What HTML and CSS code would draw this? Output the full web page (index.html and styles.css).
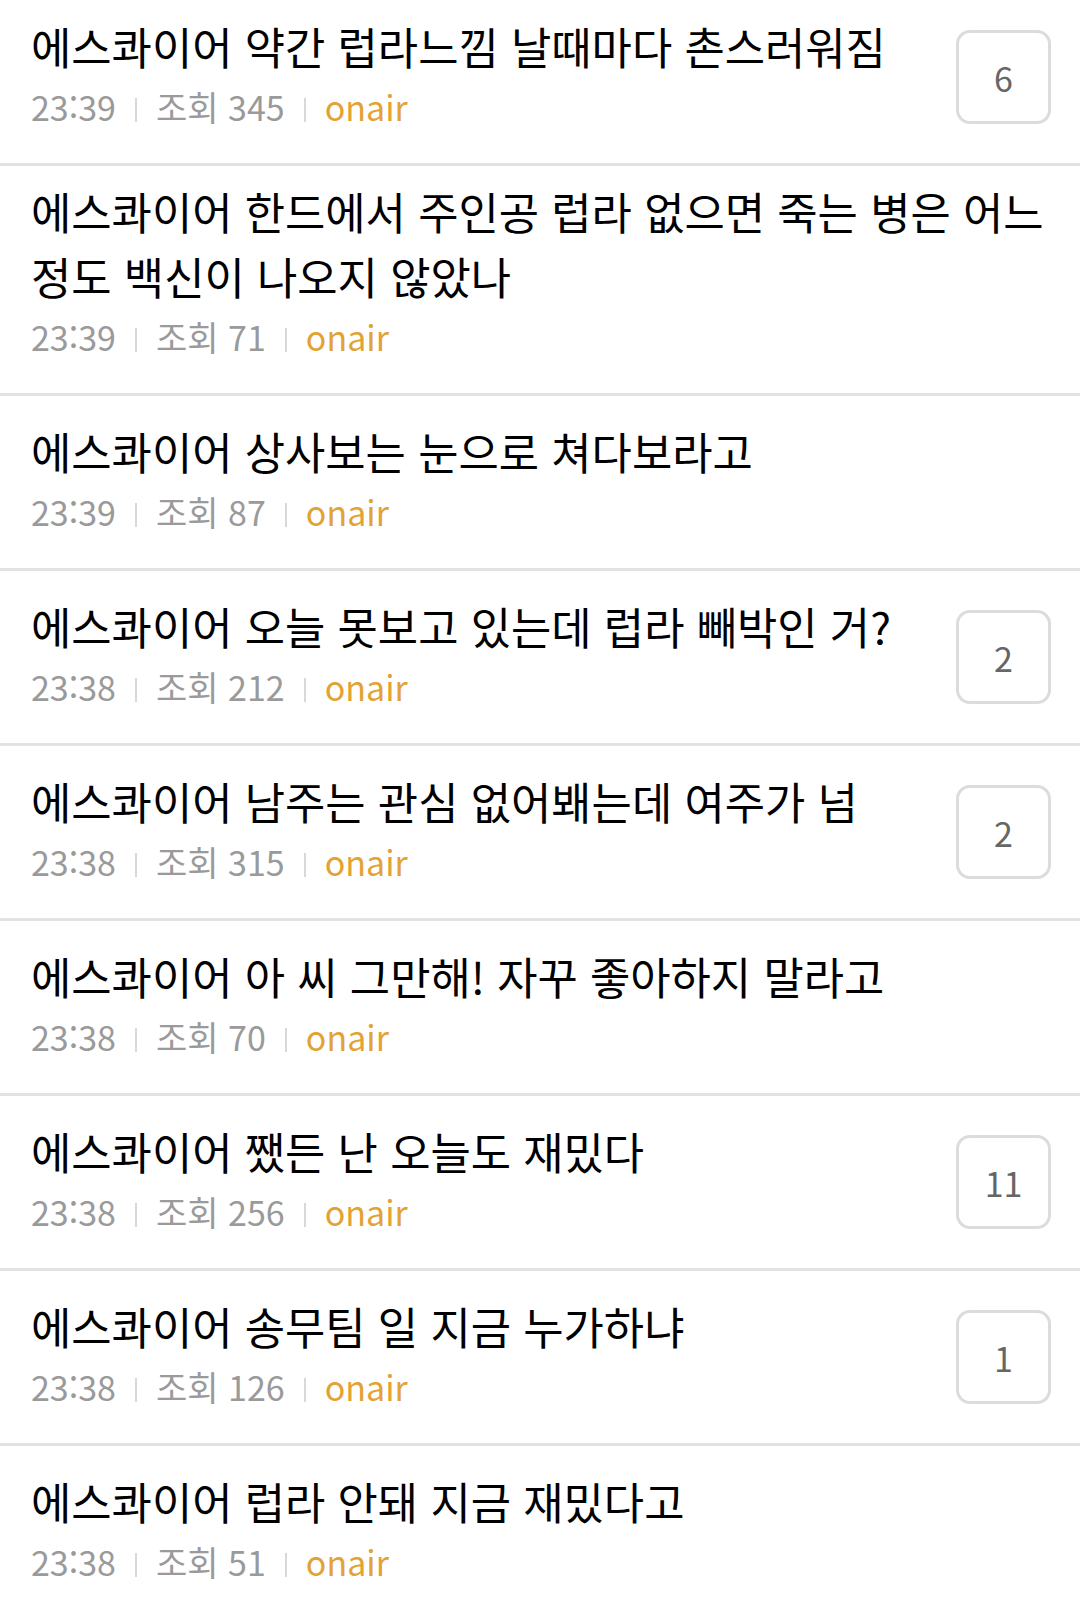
FILE: index.html
```html
<!DOCTYPE html>
<html lang="ko">
<head>
    <meta charset="UTF-8">
    <meta name="viewport" content="width=device-width, initial-scale=1.0">
    <title>onair</title>
    <link rel="stylesheet" href="styles.css">
</head>
<body>
<ul class="post-list">
    <li class="post">
        <div class="post-info">
            <p class="post-title">에스콰이어 약간 럽라느낌 날때마다 촌스러워짐</p>
            <div class="post-meta"><span>23:39</span><span>조회 345</span><span class="board">onair</span></div>
        </div>
        <span class="cmt">6</span>
    </li>
    <li class="post">
        <div class="post-info">
            <p class="post-title">에스콰이어 한드에서 주인공 럽라 없으면 죽는 병은 어느 정도 백신이 나오지 않았나</p>
            <div class="post-meta"><span>23:39</span><span>조회 71</span><span class="board">onair</span></div>
        </div>
    </li>
    <li class="post">
        <div class="post-info">
            <p class="post-title">에스콰이어 상사보는 눈으로 쳐다보라고</p>
            <div class="post-meta"><span>23:39</span><span>조회 87</span><span class="board">onair</span></div>
        </div>
    </li>
    <li class="post">
        <div class="post-info">
            <p class="post-title">에스콰이어 오늘 못보고 있는데 럽라 빼박인 거?</p>
            <div class="post-meta"><span>23:38</span><span>조회 212</span><span class="board">onair</span></div>
        </div>
        <span class="cmt">2</span>
    </li>
    <li class="post">
        <div class="post-info">
            <p class="post-title">에스콰이어 남주는 관심 없어봬는데 여주가 넘</p>
            <div class="post-meta"><span>23:38</span><span>조회 315</span><span class="board">onair</span></div>
        </div>
        <span class="cmt">2</span>
    </li>
    <li class="post">
        <div class="post-info">
            <p class="post-title">에스콰이어 아 씨 그만해! 자꾸 좋아하지 말라고</p>
            <div class="post-meta"><span>23:38</span><span>조회 70</span><span class="board">onair</span></div>
        </div>
    </li>
    <li class="post">
        <div class="post-info">
            <p class="post-title">에스콰이어 쨌든 난 오늘도 재밌다</p>
            <div class="post-meta"><span>23:38</span><span>조회 256</span><span class="board">onair</span></div>
        </div>
        <span class="cmt">11</span>
    </li>
    <li class="post">
        <div class="post-info">
            <p class="post-title">에스콰이어 송무팀 일 지금 누가하냐</p>
            <div class="post-meta"><span>23:38</span><span>조회 126</span><span class="board">onair</span></div>
        </div>
        <span class="cmt">1</span>
    </li>
    <li class="post">
        <div class="post-info">
            <p class="post-title">에스콰이어 럽라 안돼 지금 재밌다고</p>
            <div class="post-meta"><span>23:38</span><span>조회 51</span><span class="board">onair</span></div>
        </div>
    </li>
</ul>
</body>
</html>
```

FILE: styles.css
```css
body {
    margin: 0;
    background-color: #ffffff;
    font-family: "Noto Sans CJK KR", "Noto Sans", sans-serif;
    overflow: hidden;
}

.post-list {
    list-style: none;
    margin: -9px 0 0 0;
    padding: 0;
}

/* one row of the board */
.post {
    display: flex;
    align-items: center;
    gap: 20px;
    min-height: 172px;
    padding: 0 29px 0 31px;
    border-bottom: 3px solid #e2e2e2;
}

.post-info {
    flex: 1;
    align-self: stretch;
    display: flex;
    flex-direction: column;
    justify-content: flex-end;
    padding: 13px 0 30px 0;
    min-width: 0;
}

.post-title {
    margin: 0 0 2px 0;
    font-size: 43.8px;
    line-height: 65px;
    color: #000000;
    word-break: keep-all;
}

.post-meta {
    display: flex;
    align-items: center;
    font-size: 34px;
    line-height: 52px;
    color: #9a9a9a;
}

.post-meta span + span::before {
    content: "";
    display: inline-block;
    width: 2px;
    height: 24px;
    margin: 0 19px;
    background-color: #d8d8d8;
    vertical-align: -1px;
}

.post-meta .board {
    color: #e3a234;
}

.cmt {
    flex: none;
    width: 89px;
    height: 88px;
    border: 3px solid #dcdcdc;
    border-radius: 14px;
    display: flex;
    align-items: center;
    justify-content: center;
    font-size: 34px;
    color: #666666;
}
```
